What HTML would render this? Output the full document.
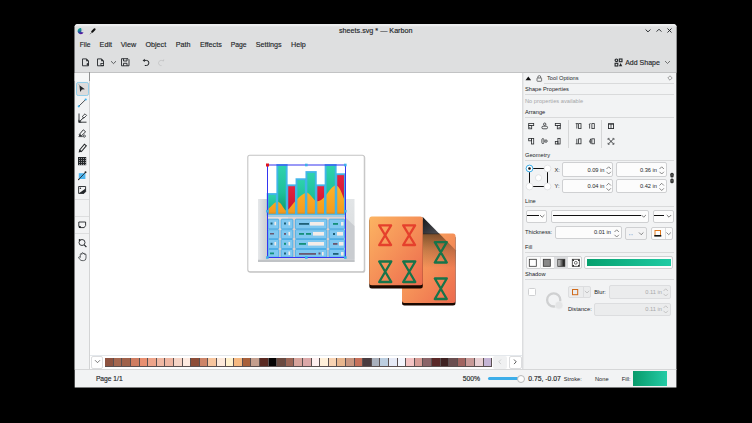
<!DOCTYPE html>
<html><head><meta charset="utf-8">
<style>
*{margin:0;padding:0;box-sizing:border-box}
html,body{width:752px;height:423px;overflow:hidden;background:#000;font-family:"Liberation Sans",sans-serif;color:#232629}
.a{position:absolute}
.t7{position:absolute;font-size:7.2px;line-height:8px;transform:translateY(0.4px) scaleY(1.1);transform-origin:0 6px;white-space:nowrap;color:#232629;-webkit-text-stroke:0.14px #232629}
.t6{position:absolute;font-size:5.7px;line-height:7px;transform:translateY(0.35px) scaleY(1.05);transform-origin:0 5.5px;white-space:nowrap;color:#232629}
svg{position:absolute;overflow:visible}
.inp{position:absolute;background:#fcfcfc;border:1px solid #cfd0d2;border-radius:2px}
.dis{background:#ebeced;border-color:#dcdddf}
.hl{position:absolute;height:1px;background:#d9dadb}
</style></head><body>
<div id="W" style="position:absolute;left:0;top:0;width:752px;height:423px;clip-path:inset(24.2px 75.6px 35.6px 74.7px round 2.5px 2.5px 0 0)">
<!-- window -->
<div class="a" style="left:74px;top:24px;width:603px;height:364px;background:#f2f3f4;border-radius:3px 3px 0 0"></div>
<div class="a" style="left:74px;top:24px;width:603px;height:48px;background:#dedfe0;border-radius:3px 3px 0 0"></div>
<div class="a" style="left:74px;top:72px;width:603px;height:1px;background:#c2c3c4"></div>
<div class="a" style="left:74px;top:24px;width:603px;height:3px;background:linear-gradient(#fafbfc,#f0f1f2 35%,#dedfe0)"></div>
<!-- toolbox -->
<div class="a" style="left:74px;top:73px;width:15px;height:296px;background:#f2f3f4"></div>
<div class="a" style="left:89px;top:73px;width:1px;height:296px;background:#d3d4d5"></div>
<!-- canvas -->
<div class="a" style="left:90px;top:73px;width:432px;height:296px;background:#fff"></div>

<svg style="left:0;top:0" width="752" height="423" viewBox="0 0 752 423">
<defs>
 <linearGradient id="teal" x1="0" y1="0" x2="0" y2="1"><stop offset="0" stop-color="#2fd2ae"/><stop offset="0.55" stop-color="#1fc09a"/><stop offset="1" stop-color="#0e9466"/></linearGradient>
 <linearGradient id="red" x1="0" y1="0" x2="0" y2="1"><stop offset="0" stop-color="#e42440"/><stop offset="1" stop-color="#c8102c"/></linearGradient>
 <linearGradient id="org" x1="0" y1="0" x2="0" y2="1"><stop offset="0" stop-color="#fbb42a"/><stop offset="1" stop-color="#f5981a"/></linearGradient>
 <linearGradient id="card" x1="0" y1="0" x2="1" y2="1"><stop offset="0" stop-color="#fcb462"/><stop offset="0.5" stop-color="#f59058"/><stop offset="1" stop-color="#ec6a4e"/></linearGradient>
 <linearGradient id="sh" x1="0" y1="0" x2="1" y2="1"><stop offset="0" stop-color="#1a1a1e"/><stop offset="0.6" stop-color="#5a4a40" stop-opacity="0.7"/><stop offset="1" stop-color="#e0905a" stop-opacity="0"/></linearGradient>
 <linearGradient id="bk" x1="0" y1="0" x2="0" y2="1"><stop offset="0" stop-color="#e2e5e7"/><stop offset="1" stop-color="#d5d8da"/></linearGradient>
 <filter id="blur1"><feGaussianBlur stdDeviation="0.6"/></filter>
</defs>
<!-- page -->
<rect x="248.3" y="155.8" width="117" height="117" rx="2" fill="#a8a8a8" opacity="0.6" filter="url(#blur1)"/>
<rect x="247.8" y="155.3" width="116.5" height="116.5" rx="2" fill="#fff" stroke="#c4c4c4" stroke-width="1.1"/>
<rect x="258" y="199" width="96.5" height="63" fill="url(#bk)"/>
<rect x="258" y="259.8" width="96.5" height="2.2" fill="#c0c3c6"/>
<path d="M345 217 L354.5 226 V259.5 H345 Z" fill="#c9ccd0"/>
<defs><linearGradient id="bl" x1="0" y1="0" x2="1" y2="0"><stop offset="0" stop-color="#e6e8ea"/><stop offset="1" stop-color="#c9cdd1"/></linearGradient></defs><path d="M258 199 H267.4 V259.5 H258 Z" fill="url(#bl)"/>
<rect x="267.4" y="194" width="9.600000000000023" height="20.69999999999999" fill="url(#teal)"/>
<rect x="277" y="165" width="10" height="49.69999999999999" fill="url(#teal)"/>
<rect x="287" y="185.3" width="9.199999999999989" height="29.399999999999977" fill="url(#red)"/>
<rect x="296.2" y="179.2" width="9.900000000000034" height="35.5" fill="url(#teal)"/>
<rect x="306.1" y="172" width="10.0" height="42.69999999999999" fill="url(#teal)"/>
<rect x="316.1" y="185.3" width="9.199999999999989" height="29.399999999999977" fill="url(#red)"/>
<rect x="325.3" y="165" width="10.699999999999989" height="49.69999999999999" fill="url(#teal)"/>
<rect x="336" y="174.2" width="9.199999999999989" height="40.5" fill="url(#red)"/>

<path d="M267.4 209.7 C272 206 275 201 278.5 201.9 C282 203 284 210.4 286.3 210.4 C290 210.4 296 196 306.8 192.4 C311 194 314 201.2 317.5 201.2 C325 201 330 186 336 185.3 C341 187 343 198 345.2 201.2 V214.7 H267.4 Z" fill="url(#org)"/>
<rect x="267.4" y="212.6" width="77.8" height="2" fill="#d88a20" opacity="0.7"/>
<rect x="267.7" y="194" width="9.000000000000023" height="20.69999999999999" fill="none" stroke="#40b4ea" stroke-width="1.9" opacity="0.95"/>
<rect x="277.3" y="165" width="9.4" height="49.69999999999999" fill="none" stroke="#40b4ea" stroke-width="1.9" opacity="0.95"/>
<rect x="287.3" y="185.3" width="8.599999999999989" height="29.399999999999977" fill="none" stroke="#40b4ea" stroke-width="1.9" opacity="0.95"/>
<rect x="296.5" y="179.2" width="9.300000000000034" height="35.5" fill="none" stroke="#40b4ea" stroke-width="1.9" opacity="0.95"/>
<rect x="306.40000000000003" y="172" width="9.4" height="42.69999999999999" fill="none" stroke="#40b4ea" stroke-width="1.9" opacity="0.95"/>
<rect x="316.40000000000003" y="185.3" width="8.599999999999989" height="29.399999999999977" fill="none" stroke="#40b4ea" stroke-width="1.9" opacity="0.95"/>
<rect x="325.6" y="165" width="10.099999999999989" height="49.69999999999999" fill="none" stroke="#40b4ea" stroke-width="1.9" opacity="0.95"/>
<rect x="336.3" y="174.2" width="8.599999999999989" height="40.5" fill="none" stroke="#40b4ea" stroke-width="1.9" opacity="0.95"/>

<rect x="267.4" y="214.8" width="77.8" height="2.2" fill="#a6cde2"/>
<rect x="267.4" y="217" width="77.8" height="40.6" fill="#e2d2ce"/>
<path d="M267.4 217 L288 238 V217 Z" fill="#ece4e2" opacity="0.6"/>
<rect x="268" y="219.2" width="10.800000000000011" height="9.600000000000023" rx="0.8" fill="#80c8f0" stroke="#45ace6" stroke-width="0.9"/>
<rect x="268" y="229.7" width="10.800000000000011" height="8.900000000000006" rx="0.8" fill="#80c8f0" stroke="#45ace6" stroke-width="0.9"/>
<rect x="268" y="239.5" width="10.800000000000011" height="9.0" rx="0.8" fill="#80c8f0" stroke="#45ace6" stroke-width="0.9"/>
<rect x="268" y="249.5" width="10.800000000000011" height="7.699999999999989" rx="0.8" fill="#80c8f0" stroke="#45ace6" stroke-width="0.9"/>
<rect x="281.1" y="219.2" width="11.799999999999955" height="9.600000000000023" rx="0.8" fill="#80c8f0" stroke="#45ace6" stroke-width="0.9"/>
<rect x="281.1" y="229.7" width="11.799999999999955" height="8.900000000000006" rx="0.8" fill="#80c8f0" stroke="#45ace6" stroke-width="0.9"/>
<rect x="281.1" y="239.5" width="11.799999999999955" height="9.0" rx="0.8" fill="#80c8f0" stroke="#45ace6" stroke-width="0.9"/>
<rect x="281.1" y="249.5" width="11.799999999999955" height="7.699999999999989" rx="0.8" fill="#80c8f0" stroke="#45ace6" stroke-width="0.9"/>
<rect x="295.3" y="219.2" width="31.599999999999966" height="9.600000000000023" rx="0.8" fill="#80c8f0" stroke="#45ace6" stroke-width="0.9"/>
<rect x="295.3" y="229.7" width="31.599999999999966" height="8.900000000000006" rx="0.8" fill="#80c8f0" stroke="#45ace6" stroke-width="0.9"/>
<rect x="295.3" y="239.5" width="31.599999999999966" height="9.0" rx="0.8" fill="#80c8f0" stroke="#45ace6" stroke-width="0.9"/>
<rect x="295.3" y="249.5" width="31.599999999999966" height="7.699999999999989" rx="0.8" fill="#80c8f0" stroke="#45ace6" stroke-width="0.9"/>
<rect x="329" y="219.2" width="15.600000000000023" height="9.600000000000023" rx="0.8" fill="#80c8f0" stroke="#45ace6" stroke-width="0.9"/>
<rect x="329" y="229.7" width="15.600000000000023" height="8.900000000000006" rx="0.8" fill="#80c8f0" stroke="#45ace6" stroke-width="0.9"/>
<rect x="329" y="239.5" width="15.600000000000023" height="9.0" rx="0.8" fill="#80c8f0" stroke="#45ace6" stroke-width="0.9"/>
<rect x="329" y="249.5" width="15.600000000000023" height="7.699999999999989" rx="0.8" fill="#80c8f0" stroke="#45ace6" stroke-width="0.9"/>


<rect x="270.5" y="222.5" width="2" height="2" fill="#1f6078"/><rect x="274.5" y="221.8" width="1.6" height="3.5" fill="#f4ece8"/>
<rect x="270" y="233" width="4" height="1.5" fill="#6a5870"/>
<rect x="270.5" y="242.8" width="2" height="2" fill="#1f6078"/><rect x="274.5" y="242" width="1.6" height="3.5" fill="#f4ece8"/>
<rect x="270" y="252.5" width="4" height="1.8" fill="#15907a"/>
<rect x="284" y="222.5" width="2" height="2" fill="#1f6078"/><rect x="288.5" y="221.8" width="1.6" height="3.5" fill="#f4ece8"/>
<rect x="284" y="233" width="2" height="1.8" fill="#6a5870"/><rect x="288.5" y="232" width="1.6" height="3.5" fill="#f4ece8"/>
<rect x="284" y="242.8" width="2" height="2" fill="#15907a"/><rect x="288.5" y="242" width="1.6" height="3.5" fill="#f4ece8"/>
<rect x="284" y="252.5" width="2" height="2" fill="#1f6078"/><rect x="288.5" y="251.5" width="1.6" height="3.5" fill="#f4ece8"/>
<rect x="299" y="223" width="10" height="1.8" fill="#1f6078"/><rect x="310" y="222" width="14" height="3.6" fill="#f4ece8"/>
<rect x="299" y="233" width="5" height="1.8" fill="#15907a"/><rect x="306" y="233" width="5" height="1.8" fill="#15907a"/><rect x="313" y="232" width="11" height="3.6" fill="#f4ece8"/>
<rect x="299" y="243" width="7" height="1.8" fill="#15907a"/><rect x="308" y="242" width="16" height="3.6" fill="#f4ece8"/>
<rect x="299" y="253" width="17" height="1.8" fill="#6a5870"/><rect x="318.5" y="252.5" width="2" height="2" fill="#6a5870"/><rect x="322" y="252" width="1.6" height="3.5" fill="#f4ece8"/>
<rect x="333" y="223" width="5" height="1.8" fill="#15907a"/><rect x="341" y="222" width="2.5" height="3.6" fill="#f4ece8"/>
<rect x="333" y="233" width="2" height="2" fill="#1f6078"/><rect x="337" y="232" width="6" height="3.6" fill="#f4ece8"/>
<rect x="333" y="243" width="4.5" height="1.8" fill="#6a5870"/><rect x="339" y="242" width="4.5" height="3.6" fill="#f4ece8"/>
<rect x="333" y="253" width="5.5" height="1.8" fill="#1f6078"/><rect x="341" y="252" width="2.5" height="3.6" fill="#f4ece8"/>

<rect x="267.5" y="165" width="78" height="92.5" fill="none" stroke="#3535f0" stroke-width="1"/>
<rect x="266" y="163.5" width="3" height="3" fill="#e0141e"/>
<g fill="#3daee9">
 <rect x="305" y="163.7" width="2.6" height="2.6"/><rect x="344" y="163.7" width="2.6" height="2.6"/>
 <rect x="266.1" y="209.9" width="2.6" height="2.6"/><rect x="344" y="209.9" width="2.6" height="2.6"/>
 <rect x="266.1" y="256.2" width="2.6" height="2.6"/><rect x="305" y="256.2" width="2.6" height="2.6"/><rect x="344" y="256.2" width="2.6" height="2.6"/>
</g>
<!-- cards -->
<defs>
 <linearGradient id="sh2" x1="422.5" y1="217" x2="436" y2="233.6" gradientUnits="userSpaceOnUse"><stop offset="0" stop-color="#141518"/><stop offset="1" stop-color="#4a4a50"/></linearGradient>
 <linearGradient id="sh3" x1="0" y1="233.6" x2="0" y2="268" gradientUnits="userSpaceOnUse"><stop offset="0" stop-color="#2a1808" stop-opacity="0.6"/><stop offset="0.5" stop-color="#3a2010" stop-opacity="0.25"/><stop offset="1" stop-color="#3a2010" stop-opacity="0"/></linearGradient>
</defs>
<rect x="402" y="235.5" width="53.5" height="70" rx="2.5" fill="#1a0800"/>
<rect x="402" y="233.6" width="53.5" height="69.3" rx="2.5" fill="url(#card)"/>
<path d="M422.5 216.8 L439.8 234.2 H422.5 Z" fill="url(#sh2)"/>
<path d="M422.5 233.6 H439.2 L456 250.5 V268 H422.5 Z" fill="url(#sh3)"/>
<rect x="369.3" y="218.5" width="53.5" height="70" rx="2.5" fill="#1a0800"/>
<rect x="369.3" y="216.5" width="53.5" height="68.7" rx="2.5" fill="url(#card)"/>
<g fill="none" stroke-width="2.3" stroke-linejoin="round">
 <path d="M379.2 225.3 H391.1 L379.2 245 H391.1 Z" stroke="#e5402c"/>
 <path d="M403.2 225.3 H415.1 L403.2 245 H415.1 Z" stroke="#e5402c"/>
 <path d="M379.2 261.5 H391.3 L379.2 282 H391.3 Z" stroke="#17744a"/>
 <path d="M403.2 261.5 H415.3 L403.2 282 H415.3 Z" stroke="#17744a"/>
 <path d="M434.8 242.2 H446.8 L434.8 262.5 H446.8 Z" stroke="#17744a"/>
 <path d="M434.8 278.5 H446.8 L434.8 299 H446.8 Z" stroke="#17744a"/>
</g>
</svg>
<!-- dock border -->
<div class="a" style="left:522px;top:73px;width:1px;height:296px;background:#dcdddf"></div><div class="a" style="left:523px;top:73px;width:1px;height:296px;background:#e8e9ea"></div>
<!-- status -->
<div class="a" style="left:74px;top:369px;width:603px;height:1px;background:#d6d7d8"></div>

<!-- title bar -->
<svg style="left:77px;top:27px" width="8" height="8" viewBox="0 0 8 8">
 <defs><linearGradient id="lg" x1="0" y1="0" x2="0.25" y2="1"><stop offset="0" stop-color="#0ea890"/><stop offset="0.45" stop-color="#1a8a98"/><stop offset="0.72" stop-color="#2a4aa0"/><stop offset="1" stop-color="#5a10a0"/></linearGradient></defs>
 <path d="M3.5 0.9 A3.2 3.2 0 1 0 6.6 5.6 L4.2 4.9 L4.6 2.9 L4.1 1 Z" fill="url(#lg)"/>
 <path d="M4.4 1.1 A3.2 3.2 0 0 1 6.7 4.2 L4.7 3.7 Z" fill="#b8c8d0" opacity="0.35"/>
</svg>
<svg style="left:88.7px;top:28px" width="7" height="7" viewBox="0 0 7 7">
 <path d="M5.6 1.2 L3.2 3.8" stroke="#111" stroke-width="2" stroke-linecap="round"/>
 <path d="M3 4.2 L1 6.2" stroke="#555" stroke-width="0.7"/>
</svg>
<div class="t7" style="left:339px;top:27px">sheets.svg * — Karbon</div>
<svg style="left:644px;top:27px" width="30" height="8" viewBox="0 0 30 8">
 <path d="M1.6 2.5 L4 4.9 L6.4 2.5" fill="none" stroke="#232629" stroke-width="0.95"/>
 <path d="M12.6 4.6 L15 2.2 L17.4 4.6" fill="none" stroke="#232629" stroke-width="0.95"/>
 <path d="M23.5 1.5 L27.5 5.5 M27.5 1.5 L23.5 5.5" fill="none" stroke="#232629" stroke-width="0.95"/>
</svg>
<!-- menu -->
<div class="t7" style="left:79.7px;top:41px;font-size:6.7px">File</div>
<div class="t7" style="left:99.6px;top:41px">Edit</div>
<div class="t7" style="left:120.7px;top:41px">View</div>
<div class="t7" style="left:145.4px;top:41px">Object</div>
<div class="t7" style="left:175.7px;top:41px">Path</div>
<div class="t7" style="left:199.9px;top:41px">Effects</div>
<div class="t7" style="left:230.7px;top:41px;font-size:6.8px">Page</div>
<div class="t7" style="left:255.7px;top:41px">Settings</div>
<div class="t7" style="left:291px;top:41px">Help</div>
<!-- toolbar -->
<svg style="left:81px;top:58px" width="90" height="9" viewBox="0 0 90 9">
 <g fill="none" stroke="#232629" stroke-width="0.9">
  <path d="M1.5 0.9 H5.5 L7.5 3 V7.8 H1.5 Z"/>
  <path d="M16.5 0.9 H20.5 L22.5 3 V7.8 H16.5 Z"/>
  <path d="M30 3.2 L32.5 5.6 L35 3.2" stroke-width="0.7"/>
  <path d="M40.5 0.7 H47 L48 1.7 V7.8 H40.5 Z"/>
  <path d="M42.5 0.7 V3 H46 V0.7 M42.5 7.8 V5.3 H46 V7.8"/>
  <path d="M63.2 2.4 H65.4 A2.5 2.55 0 0 1 65.4 7.5 H63.8" stroke-width="1"/>
  <path d="M81.5 2.8 A2.6 2.6 0 1 0 80.5 7.6" stroke="#c4c5c6"/>
 </g>
 <path d="M5.2 0.6 L7.9 3.3 L5.2 3.3 Z" fill="#232629"/>
 <path d="M20.2 0.6 L22.9 3.3 L20.2 3.3 Z" fill="#232629"/>
 <path d="M5.5 6.2 h2.5 M6.7 5 v2.5" stroke="#232629" stroke-width="0.9"/>
 <rect x="19.5" y="5" width="3.5" height="2.8" fill="#232629"/><rect x="20.3" y="5.8" width="1.9" height="1.2" fill="#dedfe0"/>
 <path d="M61.6 2.4 L63.8 0.8 V4 Z" fill="#232629"/>
 <path d="M83.2 1.2 L83 3.6 L80.8 2.6 Z" fill="#c4c5c6"/>
</svg>
<svg style="left:614px;top:58px" width="9" height="9" viewBox="0 0 9 9">
 <circle cx="2.4" cy="2.3" r="1.3" fill="none" stroke="#232629" stroke-width="1.1"/>
 <rect x="5.3" y="1" width="2.7" height="2.7" fill="none" stroke="#232629" stroke-width="1.1"/>
 <rect x="1.1" y="5.3" width="2.7" height="2.7" fill="none" stroke="#232629" stroke-width="1.1"/>
 <path d="M6.6 5.1 L8.3 8.2 H4.9 Z" fill="#232629"/>
</svg>
<div class="t7" style="left:625.2px;top:59px;font-size:7px">Add Shape</div>
<svg style="left:664px;top:60px" width="7" height="5" viewBox="0 0 7 5"><path d="M1 1 L3.5 3.5 L6 1" fill="none" stroke="#555" stroke-width="0.8"/></svg>

<!-- toolbox -->
<div class="a" style="left:74px;top:73px;width:15px;height:8px;background:#f6f7f7"></div><div class="a" style="left:89px;top:72px;width:1px;height:9px;background:#8e8f90"></div>
<div class="a" style="left:75.8px;top:81.6px;width:13.3px;height:14px;background:#dddbdb;border:1px solid #93cee9;border-radius:2.2px"></div>
<svg style="left:77px;top:83px" width="11" height="184" viewBox="0 0 11 184">
 <path d="M2.4 2.3 L7.9 6.2 L4.9 6.6 L3.2 8.9 Z" fill="#232629"/>
 <path d="M1.6 1.4 L2.6 2.3" stroke="#555" stroke-width="0.6"/>
 <!-- line tool -->
 <path d="M2 23 L8.5 16.7" stroke="#232629" stroke-width="0.8"/>
 <circle cx="1.8" cy="23.3" r="1.1" fill="#3daee9"/><circle cx="8.7" cy="16.5" r="1.1" fill="#3daee9"/>
 <!-- path tool -->
 <path d="M2 30.5 V39.2 H9.5" fill="none" stroke="#232629" stroke-width="0.9"/>
 <path d="M2 39.2 L7 34.2" stroke="#232629" stroke-width="1"/>
 <path d="M1.5 36.5 L4.7 39.6 L1.5 39.6 Z" fill="#232629"/>
 <path d="M5.2 33.6 L8 30.8 L9.6 32.4 L6.8 35.2 Z" fill="none" stroke="#232629" stroke-width="0.8"/>
 <!-- calligraphy -->
 <path d="M2 51.8 L6.3 46.8 L8.6 48.8 L4 53.2 Z" fill="none" stroke="#232629" stroke-width="0.9"/>
 <path d="M1.6 53.4 L3.4 51 L4.4 52.6 Z" fill="#232629"/>
 <path d="M1.5 53.6 H5.8 M6.2 53 a1.1 1.1 0 1 0 2.2 0.2 a1.1 1.1 0 1 0 -2.2 -0.2" fill="none" stroke="#232629" stroke-width="0.75"/>
 <!-- pencil -->
 <path d="M2.6 67 L7.4 61.2 L9.3 62.9 L4.4 68.6 Z" fill="none" stroke="#232629" stroke-width="1.05"/>
 <path d="M1.6 69.6 L2.3 66.8 L4.6 68.8 Z" fill="#232629"/>
 <!-- grid -->
 <rect x="1" y="74" width="8.2" height="8.2" fill="#232629"/>
 <g fill="#f2f3f4"><rect x="2.15" y="75.15" width="0.75" height="0.75"/><rect x="2.15" y="77.15" width="0.75" height="0.75"/><rect x="2.15" y="79.15" width="0.75" height="0.75"/><rect x="2.15" y="81.15" width="0.75" height="0.75"/><rect x="4.15" y="75.15" width="0.75" height="0.75"/><rect x="4.15" y="77.15" width="0.75" height="0.75"/><rect x="4.15" y="79.15" width="0.75" height="0.75"/><rect x="4.15" y="81.15" width="0.75" height="0.75"/><rect x="6.15" y="75.15" width="0.75" height="0.75"/><rect x="6.15" y="77.15" width="0.75" height="0.75"/><rect x="6.15" y="79.15" width="0.75" height="0.75"/><rect x="6.15" y="81.15" width="0.75" height="0.75"/><rect x="8.15" y="75.15" width="0.75" height="0.75"/><rect x="8.15" y="77.15" width="0.75" height="0.75"/><rect x="8.15" y="79.15" width="0.75" height="0.75"/><rect x="8.15" y="81.15" width="0.75" height="0.75"/></g>
 <!-- gradient tool -->
 <rect x="1.8" y="90.2" width="6.6" height="5.8" fill="#4db4ee"/>
 <path d="M1.6 96.6 L8.4 89.4" stroke="#232629" stroke-width="0.9"/>
 <circle cx="8.5" cy="89.3" r="1" fill="#232629"/><circle cx="1.7" cy="96.5" r="0.7" fill="#232629"/>
 <!-- image tool -->
 <path d="M1.6 103.5 H8.6 V108.6 L6.9 110.4 H1.6 Z" fill="none" stroke="#232629" stroke-width="0.9"/>
 <path d="M1.6 110.4 L8.6 105.6 V108.6 L6.9 110.4 Z" fill="#232629"/><circle cx="3.4" cy="105.3" r="0.75" fill="#232629"/>
 <!-- page shape -->
 <path d="M1.8 139 H8.6 V142.5 L7.2 144.6 H3.3 L1.8 143 Z" fill="none" stroke="#232629" stroke-width="0.9"/>
 <path d="M1.6 142.6 L4 144.9 L2 144.9 Z" fill="#232629"/><circle cx="2.9" cy="144" r="1.1" fill="#232629"/>
 <!-- zoom -->
 <circle cx="5" cy="159.5" r="3" fill="none" stroke="#232629" stroke-width="0.9"/>
 <path d="M7.2 161.8 L9.4 164" stroke="#232629" stroke-width="1.1"/>
 <circle cx="2.6" cy="157" r="0.9" fill="#232629"/>
 <!-- hand -->
 <path d="M3.3 174.5 V171.5 Q3.3 170.6 4.1 170.6 Q4.8 170.6 4.8 171.4 V170.5 Q4.8 169.7 5.6 169.7 Q6.3 169.7 6.3 170.5 V171 Q6.3 170.3 7.1 170.3 Q7.8 170.3 7.8 171.1 V171.8 Q7.8 171.1 8.4 171.1 Q9 171.1 9 171.8 V175 Q9 177.6 6.6 177.6 H5 Q3.8 177.6 2.8 176.4 L1.6 174.6 Q1.6 173.8 2.4 173.8 Z" fill="none" stroke="#232629" stroke-width="0.7"/>
</svg>
<div class="a" style="left:75px;top:199px;width:14px;height:1px;background:#dddedf"></div>
<div class="a" style="left:75px;top:216px;width:14px;height:1px;background:#dddedf"></div>
<div class="a" style="left:75px;top:233px;width:14px;height:1px;background:#dddedf"></div>

<!-- docker -->
<svg style="left:525px;top:75px" width="20" height="7" viewBox="0 0 20 7">
 <path d="M0.5 5.2 L3.3 1.6 L6.1 5.2 Z" fill="#111"/>
 <rect x="12" y="3" width="4.6" height="3.3" rx="0.5" fill="none" stroke="#444" stroke-width="0.7"/>
 <path d="M12.9 3 V2 A1.4 1.4 0 0 1 15.7 2 V3" fill="none" stroke="#444" stroke-width="0.7"/>
</svg>
<div class="t6" style="left:547px;top:74.5px">Tool Options</div>
<svg style="left:667px;top:75px" width="6" height="6" viewBox="0 0 6 6"><path d="M3 0.8 L5.2 3 L3 5.2 L0.8 3 Z" fill="none" stroke="#666" stroke-width="0.6"/></svg>
<div class="hl" style="left:544px;top:83px;width:130px"></div>
<div class="t6" style="left:525px;top:86px">Shape Properties</div>
<div class="hl" style="left:525px;top:94px;width:149px"></div>
<div class="t6" style="left:525px;top:97.5px;color:#a5a6a8">No properties available</div>
<div class="t6" style="left:525px;top:108.5px">Arrange</div>
<div class="hl" style="left:525px;top:117px;width:149px"></div>
<svg style="left:526px;top:120px" width="92" height="28" viewBox="0 0 92 28">
 <g fill="none" stroke="#2a2c2f" stroke-width="0.8">
  <rect x="2.7" y="3.4" width="5" height="2.2"/><rect x="2.7" y="5.6" width="3" height="3.2"/>
  <rect x="15.9" y="6.2" width="5.6" height="2.6" rx="1.2"/>
  <rect x="29.3" y="3.4" width="5" height="2.2"/><rect x="31.3" y="5.6" width="3" height="3.2"/>
  <path d="M49.7 3.6 H52 M50.8 3.6 V8.6"/><rect x="52.6" y="3.6" width="2.4" height="5"/>
  <path d="M63.2 4.6 Q63.2 3.6 64.6 3.6 M63.6 4.2 V8.6"/><rect x="65.9" y="3.6" width="2.4" height="5"/>
  <rect x="2.7" y="18.4" width="2.8" height="2.4"/><rect x="5.5" y="18.4" width="2.2" height="5.6"/>
  <rect x="15.9" y="18.6" width="2" height="5" rx="1"/><circle cx="20" cy="21.1" r="1.2"/>
  <rect x="29.3" y="21.4" width="2.6" height="2.6"/><rect x="31.9" y="18.4" width="2.2" height="5.6"/>
  <path d="M49.7 23.8 H52 M50.8 18.8 V23.8"/><rect x="52.6" y="18.8" width="2.4" height="5"/>
  <path d="M63.4 21.6 L64.8 18.8 V23.8 M63.2 22 H65"/><rect x="65.9" y="18.8" width="2.4" height="5"/>
 </g>
 <rect x="82" y="3.2" width="6" height="5.8" fill="#2a2c2f"/>
 <rect x="82.9" y="4.6" width="1.7" height="3.5" fill="#f2f3f4"/><rect x="85.4" y="4.6" width="1.7" height="3.5" fill="#f2f3f4"/>
 <g fill="none" stroke="#2a2c2f" stroke-width="0.9">
  <path d="M82.4 18.8 L87.6 24 M87.6 18.8 L82.4 24"/>
  <path d="M82 20 V18.4 H83.6 M86.4 18.4 H88 V20 M82 22.8 V24.4 H83.6 M86.4 24.4 H88 V22.8" stroke-width="0.6"/>
 </g>
 <circle cx="3.9" cy="7.6" r="0.5" fill="#2a2c2f"/><circle cx="33.1" cy="7.6" r="0.5" fill="#2a2c2f"/>
 <circle cx="18.7" cy="4.2" r="1.2" fill="none" stroke="#2a2c2f" stroke-width="0.8"/>
</svg>
<div class="a" style="left:568px;top:119.5px;width:1px;height:28px;background:#d5d6d7"></div>
<div class="a" style="left:601px;top:119.5px;width:1px;height:28px;background:#d5d6d7"></div>
<div class="t6" style="left:525px;top:152px">Geometry</div>
<div class="hl" style="left:525px;top:160px;width:149px"></div>
<svg style="left:526px;top:165px" width="26" height="26" viewBox="0 0 26 26">
 <path d="M3.5 3.5 H21.5 V21.5 H3.5 Z" fill="none" stroke="#111" stroke-width="1"/>
 <circle cx="3.5" cy="3.5" r="3.4" fill="#fff" stroke="#3daee9" stroke-width="1"/>
 <circle cx="3.5" cy="3.5" r="1.3" fill="#111"/>
 <circle cx="21.5" cy="3.5" r="3.4" fill="#fff" stroke="#d4d5d6" stroke-width="0.6"/>
 <circle cx="3.5" cy="21.5" r="3.4" fill="#fff" stroke="#d4d5d6" stroke-width="0.6"/>
 <circle cx="21.5" cy="21.5" r="3.4" fill="#fff" stroke="#d4d5d6" stroke-width="0.6"/>
 <circle cx="12.5" cy="12.8" r="3.1" fill="#fff" stroke="#d4d5d6" stroke-width="0.6"/>
</svg>
<div class="t6" style="left:554.5px;top:166.5px">X:</div>
<div class="t6" style="left:554.5px;top:183px">Y:</div>
<div class="inp" style="left:562.3px;top:162.4px;width:51.2px;height:14.3px"></div>
<div class="inp" style="left:616.2px;top:162.4px;width:51.2px;height:14.3px"></div>
<div class="inp" style="left:562.3px;top:179.2px;width:51.2px;height:14.3px"></div>
<div class="inp" style="left:616.2px;top:179.2px;width:51.2px;height:14.3px"></div>
<div class="t6" style="left:585.5px;top:166.5px;width:19px;text-align:right">0.09 in</div>
<div class="t6" style="left:638px;top:166.5px;width:19px;text-align:right">0.36 in</div>
<div class="t6" style="left:585.5px;top:183px;width:19px;text-align:right">0.04 in</div>
<div class="t6" style="left:638px;top:183px;width:19px;text-align:right">0.42 in</div>
<svg style="left:605px;top:164px" width="62" height="30" viewBox="0 0 62 30">
 <g fill="none" stroke="#555" stroke-width="0.7">
  <path d="M1.5 5 L3.7 2.8 L5.9 5 M1.5 7.8 L3.7 10 L5.9 7.8"/>
  <path d="M54.5 5 L56.7 2.8 L58.9 5 M54.5 7.8 L56.7 10 L58.9 7.8"/>
  <path d="M1.5 21.5 L3.7 19.3 L5.9 21.5 M1.5 24.3 L3.7 26.5 L5.9 24.3"/>
  <path d="M54.5 21.5 L56.7 19.3 L58.9 21.5 M54.5 24.3 L56.7 26.5 L58.9 24.3"/>
 </g>
</svg>
<svg style="left:669px;top:172px" width="6" height="12" viewBox="0 0 6 12">
 <rect x="1.3" y="0.8" width="3.4" height="4.6" rx="1.5" fill="#333"/>
 <rect x="1.3" y="6.6" width="3.4" height="4.6" rx="1.5" fill="#333"/>
 <path d="M2.2 3 H3.8 M2.2 8.8 H3.8" stroke="#aaa" stroke-width="0.5"/>
</svg>
<div class="t6" style="left:525px;top:198px">Line</div>
<div class="hl" style="left:525px;top:206px;width:149px"></div>
<div class="inp" style="left:525.7px;top:209.5px;width:21.5px;height:13px"></div>
<div class="inp" style="left:551px;top:209.5px;width:97.5px;height:13px"></div>
<div class="inp" style="left:652.5px;top:209.5px;width:21px;height:13px"></div>
<svg style="left:525px;top:209px" width="150" height="14" viewBox="0 0 150 14">
 <g fill="none" stroke="#444" stroke-width="0.7">
  <path d="M15 6 L17.2 8.2 L19.4 6"/>
  <path d="M116.5 6 L118.7 8.2 L120.9 6"/>
  <path d="M141.8 6 L144 8.2 L146.2 6"/>
 </g>
</svg>
<div class="a" style="left:527px;top:215px;width:11.5px;height:1px;background:#111"></div>
<div class="a" style="left:553px;top:215px;width:88px;height:1px;background:#111"></div>
<div class="a" style="left:654px;top:215px;width:10px;height:1px;background:#111"></div>
<div class="t6" style="left:525px;top:229px">Thickness:</div>
<div class="inp" style="left:554.5px;top:226.3px;width:67px;height:13px"></div>
<div class="t6" style="left:592px;top:229px;width:19px;text-align:right">0.01 in</div>
<div class="inp" style="left:625.3px;top:227px;width:22px;height:12.5px;background:#f3f3f4"></div>
<div class="inp" style="left:651.3px;top:227px;width:22px;height:12.5px"></div>
<div class="a" style="left:665px;top:227.5px;width:1px;height:11.5px;background:#dcdddf"></div>
<svg style="left:612px;top:227px" width="62" height="13" viewBox="0 0 62 13">
 <g fill="none" stroke="#555" stroke-width="0.7">
  <path d="M2.5 5 L4.7 2.8 L6.9 5 M2.5 7.8 L4.7 10 L6.9 7.8"/>
  <path d="M27 5.5 L29.2 7.7 L31.4 5.5"/>
  <path d="M54.5 5.5 L56.7 7.7 L58.9 5.5"/>
 </g>
 <path d="M17 7.7 H21" stroke="#8ab0d8" stroke-width="0.8" stroke-dasharray="1 0.6"/>
 <rect x="43" y="3.5" width="5.5" height="5" fill="none" stroke="#e07a20" stroke-width="1"/>
 <rect x="42.3" y="8" width="7" height="1.6" fill="#111"/>
</svg>
<div class="t6" style="left:525px;top:244px">Fill</div>
<div class="hl" style="left:525px;top:252px;width:149px"></div>
<div class="inp" style="left:526px;top:256px;width:56px;height:13.3px"></div>
<div class="a" style="left:553.7px;top:256.5px;width:14.5px;height:12.3px;background:#dcdddf"></div>
<div class="a" style="left:539.5px;top:256.5px;width:1px;height:12.3px;background:#e3e4e5"></div>
<svg style="left:526px;top:256px" width="56" height="14" viewBox="0 0 56 14">
 <rect x="3.3" y="3.3" width="7" height="7" fill="#fff" stroke="#333" stroke-width="0.8"/>
 <rect x="17.3" y="3.3" width="7" height="7" fill="#888" stroke="#333" stroke-width="0.8"/>
 <defs><linearGradient id="gg"><stop offset="0" stop-color="#ddd"/><stop offset="1" stop-color="#000"/></linearGradient></defs>
 <rect x="31.8" y="3.3" width="7" height="7" fill="url(#gg)" stroke="#333" stroke-width="0.8"/>
 <rect x="46.3" y="3.3" width="7" height="7" fill="#fff" stroke="#333" stroke-width="0.8"/>
 <path d="M46.5 3.5 h1.5 v1.5 h-1.5z M52 3.5 h1.5 v1.5 h-1.5z M46.5 9 h1.5 v1.5 h-1.5z M52 9 h1.5 v1.5 h-1.5z" fill="#333"/><circle cx="49.8" cy="6.8" r="1.4" fill="none" stroke="#333" stroke-width="0.7"/>
</svg>
<div class="inp" style="left:584px;top:255.6px;width:89px;height:13.7px"></div>
<div class="a" style="left:587px;top:259px;width:84px;height:7px;background:linear-gradient(90deg,#06a06e,#1fcba4)"></div>
<div class="t6" style="left:525px;top:271px">Shadow</div>
<div class="hl" style="left:525px;top:279px;width:149px"></div>
<div class="a" style="left:528.3px;top:288.4px;width:7.7px;height:7.3px;background:#fff;border:1px solid #cfd0d2;border-radius:1.5px"></div>
<svg style="left:545px;top:291px" width="20" height="20" viewBox="0 0 20 20">
 <circle cx="8.7" cy="8.9" r="6.6" fill="none" stroke="#cfd0d1" stroke-width="2.3"/>
 <circle cx="14" cy="14.2" r="4" fill="#e4e5e6" stroke="#f2f3f4" stroke-width="0.6"/>
</svg>
<div class="inp" style="left:568.2px;top:285.7px;width:22.5px;height:12.6px;background:#ebeced;border-color:#dcdddf"></div>
<div class="a" style="left:582.6px;top:286px;width:1px;height:12px;background:#dcdddf"></div>
<svg style="left:568px;top:285px" width="23" height="13" viewBox="0 0 23 13">
 <rect x="4.5" y="4.5" width="5.2" height="5.2" fill="none" stroke="#d06a1a" stroke-width="1"/>
 <path d="M16.8 5.8 L19 8 L21.2 5.8" fill="none" stroke="#aaa" stroke-width="0.6"/>
</svg>
<div class="t6" style="left:594.2px;top:289px">Blur:</div>
<div class="t6" style="left:568px;top:306px">Distance:</div>
<div class="inp dis" style="left:609.4px;top:285.4px;width:62px;height:13.2px"></div>
<div class="inp dis" style="left:594.4px;top:302.5px;width:77px;height:13.8px"></div>
<div class="t6" style="left:643px;top:289px;width:19px;text-align:right;color:#a8a9aa">0.11 in</div>
<div class="t6" style="left:643px;top:306px;width:19px;text-align:right;color:#a8a9aa">0.11 in</div>
<svg style="left:662px;top:286px" width="9" height="30" viewBox="0 0 9 30">
 <g fill="none" stroke="#aaa" stroke-width="0.6">
  <path d="M1.5 5 L3.7 2.8 L5.9 5 M1.5 7.8 L3.7 10 L5.9 7.8"/>
  <path d="M1.5 22 L3.7 19.8 L5.9 22 M1.5 24.8 L3.7 27 L5.9 24.8"/>
 </g>
</svg>

<!-- palette -->
<div class="a" style="left:90px;top:355px;width:432px;height:1px;background:#e4e8ec"></div>
<div class="a" style="left:91px;top:355.6px;width:12px;height:13.3px;background:#fff;border:1px solid #dcdddf;border-radius:2px"></div>
<svg style="left:94px;top:359px" width="7" height="5" viewBox="0 0 7 5"><path d="M1 1.2 L3.5 3.7 L6 1.2" fill="none" stroke="#444" stroke-width="0.7"/></svg>
<div class="a" style="left:105.3px;top:357.6px;width:386.7px;height:9px;background:#5a5050;overflow:hidden"><div style="position:absolute;left:0.00px;top:0.6px;width:8.6px;height:7.8px;background:#8e5340;border-right:0.7px solid #5a5050"></div><div style="position:absolute;left:8.60px;top:0.6px;width:8.6px;height:7.8px;background:#a5674f;border-right:0.7px solid #5a5050"></div><div style="position:absolute;left:17.20px;top:0.6px;width:8.6px;height:7.8px;background:#9f614a;border-right:0.7px solid #5a5050"></div><div style="position:absolute;left:25.80px;top:0.6px;width:8.6px;height:7.8px;background:#cf7d61;border-right:0.7px solid #5a5050"></div><div style="position:absolute;left:34.40px;top:0.6px;width:8.6px;height:7.8px;background:#e88f70;border-right:0.7px solid #5a5050"></div><div style="position:absolute;left:43.00px;top:0.6px;width:8.6px;height:7.8px;background:#eda48a;border-right:0.7px solid #5a5050"></div><div style="position:absolute;left:51.60px;top:0.6px;width:8.6px;height:7.8px;background:#f0b8a3;border-right:0.7px solid #5a5050"></div><div style="position:absolute;left:60.20px;top:0.6px;width:8.6px;height:7.8px;background:#eeb6a2;border-right:0.7px solid #5a5050"></div><div style="position:absolute;left:68.80px;top:0.6px;width:8.6px;height:7.8px;background:#f5d4c6;border-right:0.7px solid #5a5050"></div><div style="position:absolute;left:77.40px;top:0.6px;width:8.6px;height:7.8px;background:#fdeae0;border-right:0.7px solid #5a5050"></div><div style="position:absolute;left:86.00px;top:0.6px;width:8.6px;height:7.8px;background:#8d4d38;border-right:0.7px solid #5a5050"></div><div style="position:absolute;left:94.60px;top:0.6px;width:8.6px;height:7.8px;background:#cc8468;border-right:0.7px solid #5a5050"></div><div style="position:absolute;left:103.20px;top:0.6px;width:8.6px;height:7.8px;background:#f7c59e;border-right:0.7px solid #5a5050"></div><div style="position:absolute;left:111.80px;top:0.6px;width:8.6px;height:7.8px;background:#fde9da;border-right:0.7px solid #5a5050"></div><div style="position:absolute;left:120.40px;top:0.6px;width:8.6px;height:7.8px;background:#fff0cc;border-right:0.7px solid #5a5050"></div><div style="position:absolute;left:129.00px;top:0.6px;width:8.6px;height:7.8px;background:#f5b880;border-right:0.7px solid #5a5050"></div><div style="position:absolute;left:137.60px;top:0.6px;width:8.6px;height:7.8px;background:#a8603a;border-right:0.7px solid #5a5050"></div><div style="position:absolute;left:146.20px;top:0.6px;width:8.6px;height:7.8px;background:#c49f8e;border-right:0.7px solid #5a5050"></div><div style="position:absolute;left:154.80px;top:0.6px;width:8.6px;height:7.8px;background:#5a2a22;border-right:0.7px solid #5a5050"></div><div style="position:absolute;left:163.40px;top:0.6px;width:8.6px;height:7.8px;background:#050303;border-right:0.7px solid #5a5050"></div><div style="position:absolute;left:172.00px;top:0.6px;width:8.6px;height:7.8px;background:#6b4a40;border-right:0.7px solid #5a5050"></div><div style="position:absolute;left:180.60px;top:0.6px;width:8.6px;height:7.8px;background:#9c6656;border-right:0.7px solid #5a5050"></div><div style="position:absolute;left:189.20px;top:0.6px;width:8.6px;height:7.8px;background:#d7a49c;border-right:0.7px solid #5a5050"></div><div style="position:absolute;left:197.80px;top:0.6px;width:8.6px;height:7.8px;background:#dba8a8;border-right:0.7px solid #5a5050"></div><div style="position:absolute;left:206.40px;top:0.6px;width:8.6px;height:7.8px;background:#fff0f0;border-right:0.7px solid #5a5050"></div><div style="position:absolute;left:215.00px;top:0.6px;width:8.6px;height:7.8px;background:#fff0da;border-right:0.7px solid #5a5050"></div><div style="position:absolute;left:223.60px;top:0.6px;width:8.6px;height:7.8px;background:#f8d3b3;border-right:0.7px solid #5a5050"></div><div style="position:absolute;left:232.20px;top:0.6px;width:8.6px;height:7.8px;background:#e8b68e;border-right:0.7px solid #5a5050"></div><div style="position:absolute;left:240.80px;top:0.6px;width:8.6px;height:7.8px;background:#c99680;border-right:0.7px solid #5a5050"></div><div style="position:absolute;left:249.40px;top:0.6px;width:8.6px;height:7.8px;background:#c6705a;border-right:0.7px solid #5a5050"></div><div style="position:absolute;left:258.00px;top:0.6px;width:8.6px;height:7.8px;background:#4a3c40;border-right:0.7px solid #5a5050"></div><div style="position:absolute;left:266.60px;top:0.6px;width:8.6px;height:7.8px;background:#a9b0bc;border-right:0.7px solid #5a5050"></div><div style="position:absolute;left:275.20px;top:0.6px;width:8.6px;height:7.8px;background:#bccee0;border-right:0.7px solid #5a5050"></div><div style="position:absolute;left:283.80px;top:0.6px;width:8.6px;height:7.8px;background:#e6eaf6;border-right:0.7px solid #5a5050"></div><div style="position:absolute;left:292.40px;top:0.6px;width:8.6px;height:7.8px;background:#f4f6fe;border-right:0.7px solid #5a5050"></div><div style="position:absolute;left:301.00px;top:0.6px;width:8.6px;height:7.8px;background:#f4c4c4;border-right:0.7px solid #5a5050"></div><div style="position:absolute;left:309.60px;top:0.6px;width:8.6px;height:7.8px;background:#d69c96;border-right:0.7px solid #5a5050"></div><div style="position:absolute;left:318.20px;top:0.6px;width:8.6px;height:7.8px;background:#8a6468;border-right:0.7px solid #5a5050"></div><div style="position:absolute;left:326.80px;top:0.6px;width:8.6px;height:7.8px;background:#5a2828;border-right:0.7px solid #5a5050"></div><div style="position:absolute;left:335.40px;top:0.6px;width:8.6px;height:7.8px;background:#3e2222;border-right:0.7px solid #5a5050"></div><div style="position:absolute;left:344.00px;top:0.6px;width:8.6px;height:7.8px;background:#6a4e50;border-right:0.7px solid #5a5050"></div><div style="position:absolute;left:352.60px;top:0.6px;width:8.6px;height:7.8px;background:#a06460;border-right:0.7px solid #5a5050"></div><div style="position:absolute;left:361.20px;top:0.6px;width:8.6px;height:7.8px;background:#c89a98;border-right:0.7px solid #5a5050"></div><div style="position:absolute;left:369.80px;top:0.6px;width:8.6px;height:7.8px;background:#e8d0d4;border-right:0.7px solid #5a5050"></div><div style="position:absolute;left:378.40px;top:0.6px;width:8.6px;height:7.8px;background:#c4b4d4;border-right:0.7px solid #5a5050"></div></div>
<div class="a" style="left:493px;top:355.5px;width:13.5px;height:13.5px;background:#f0f1f2;border-radius:2px"></div>
<div class="a" style="left:508.8px;top:355.5px;width:13.2px;height:13.5px;background:#fff;border:1px solid #dcdddf;border-radius:2px"></div>
<svg style="left:496px;top:358px" width="24" height="8" viewBox="0 0 24 8">
 <path d="M5 1.5 L2.8 3.8 L5 6.1" fill="none" stroke="#c0c1c2" stroke-width="0.7"/>
 <path d="M18 1.5 L20.2 3.8 L18 6.1" fill="none" stroke="#333" stroke-width="0.8"/>
</svg>
<!-- status bar -->
<div class="t7" style="left:95.9px;top:375px;font-size:6.7px">Page 1/1</div>
<div class="t7" style="left:462.7px;top:375px;font-size:6.8px">500%</div>
<div class="a" style="left:487.6px;top:377.3px;width:31px;height:2.8px;background:#3daee9;border-radius:1.5px"></div>
<div class="a" style="left:517px;top:374.8px;width:8px;height:8px;background:#fcfcfc;border:0.8px solid #b8b9ba;border-radius:50%"></div>
<div class="t7" style="left:528.2px;top:375px;font-size:6.85px">0.75, -0.07</div>
<div class="t6" style="left:563.8px;top:375.5px">Stroke:</div>
<div class="t6" style="left:595px;top:375.5px">None</div>
<div class="t6" style="left:621.8px;top:375.5px">Fill:</div>
<div class="a" style="left:633px;top:371.1px;width:34px;height:15px;background:linear-gradient(90deg,#079a6a,#24cba6)"></div>
</div>
</body></html>
